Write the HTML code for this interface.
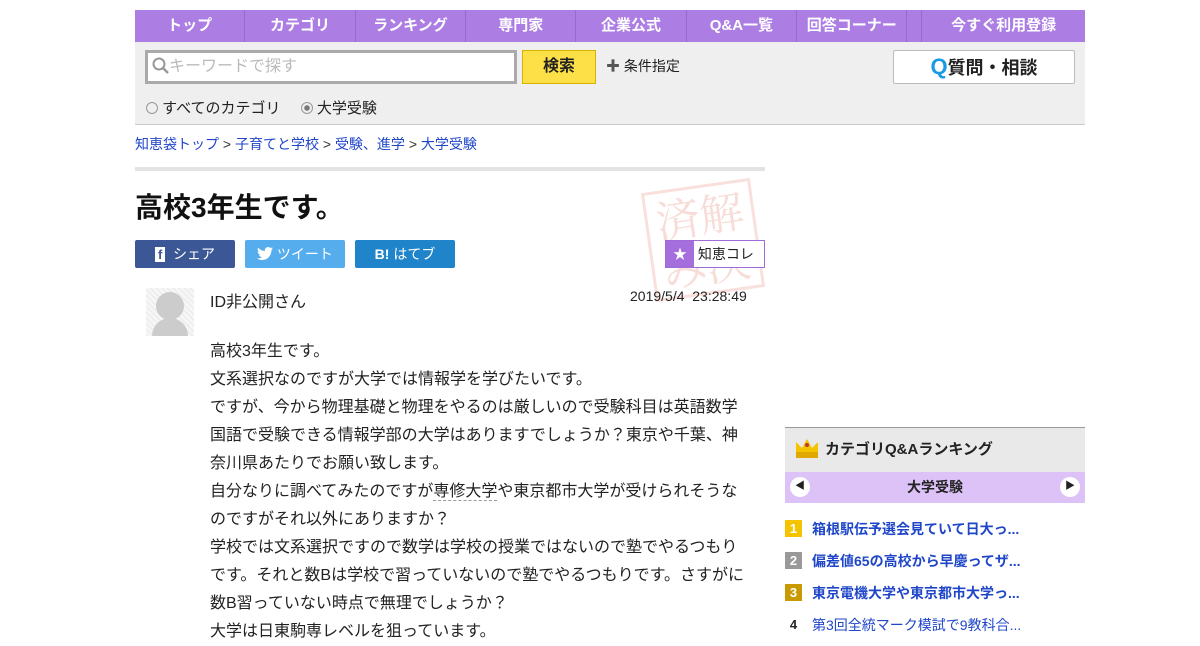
<!DOCTYPE html>
<html><head><meta charset="utf-8"><style>
*{margin:0;padding:0;box-sizing:border-box}
body{width:1200px;height:630px;overflow:hidden;background:#fff;font-family:"Liberation Sans","Noto Sans CJK JP",sans-serif;color:#222;position:relative}
.a{position:absolute}
.nav{left:135px;top:10px;width:950px;height:32px;background:#ac7ee4;display:flex}
.nav div{width:112px;color:#fff;font-weight:bold;font-size:15px;text-align:center;line-height:32px;border-right:1px solid #9a68d4}
.nav div:last-child{border:none;width:166px;border-left:1px solid #9a68d4;margin-left:14px}
.sb{left:135px;top:42px;width:950px;height:83px;background:#efefef;border-bottom:1px solid #ccc}
.bc{font-size:14px;color:#333}
.bc a{color:#1f46c8;text-decoration:none}
.sh{top:240px;height:28px;width:100px;color:#fff;font-size:14px;line-height:28px;border-radius:2px;text-align:center}
p.t{font-size:16px;line-height:28px;color:#222}
.rk{left:812px;font-size:14px;font-weight:bold;color:#1f46c8}
.num{left:785px;width:17px;height:17px;color:#fff;font-size:13px;font-weight:bold;text-align:center;line-height:17px}
</style></head><body>
<div class="a nav"><div>トップ</div><div>カテゴリ</div><div>ランキング</div><div>専門家</div><div>企業公式</div><div>Q&amp;A一覧</div><div>回答コーナー</div><div>今すぐ利用登録</div></div>
<div class="a sb"></div>
<div class="a" style="left:145px;top:50px;width:372px;height:34px;border:3px solid #aaa;background:#fff;font-size:16px;color:#bbb;line-height:28px;padding-left:4px"><svg width="17" height="17" viewBox="0 0 17 17" style="vertical-align:-3px"><circle cx="7" cy="7" r="5.5" fill="none" stroke="#999" stroke-width="2"/><path d="M11 11l5 5" stroke="#999" stroke-width="2.5"/></svg>キーワードで探す</div>
<div class="a" style="left:522px;top:50px;width:74px;height:34px;background:#fde047;border:1px solid #d9b200;font-weight:bold;font-size:16px;text-align:center;line-height:32px">検索</div>
<div class="a" style="left:606px;top:56px;font-size:14px"><b style="color:#555">✚</b> 条件指定</div>
<div class="a" style="left:893px;top:50px;width:182px;height:34px;background:#fff;border:1px solid #bbb;border-radius:2px;font-weight:bold;font-size:18px;text-align:center;line-height:32px"><span style="color:#1a9ae6;font-size:22px">Q</span>質問・相談</div>
<div class="a" style="left:146px;top:97px;font-size:15px"><span style="display:inline-block;width:12px;height:12px;border:1px solid #999;border-radius:50%;background:#eee;vertical-align:-1px"></span> すべてのカテゴリ <span style="display:inline-block;width:12px;height:12px;border:1px solid #999;border-radius:50%;background:radial-gradient(#777 2.5px,#eee 3px);vertical-align:-1px;margin-left:16px"></span> 大学受験</div>
<div class="a bc" style="left:135px;top:134px"><a>知恵袋トップ</a> &gt; <a>子育てと学校</a> &gt; <a>受験、進学</a> &gt; <a>大学受験</a></div>
<div class="a" style="left:135px;top:167px;width:630px;height:4px;background:#e3e3e3"></div>
<div class="a" style="left:135px;top:186px;font-size:28px;font-weight:bold;color:#111">高校3年生です。</div>
<div class="a" style="left:648px;top:185px;width:110px;height:110px;border:3px solid #fae0dc;transform:rotate(-8deg);color:#f8dcd7;font-size:44px;line-height:50px;text-align:center;font-family:'Noto Serif CJK SC',serif">済解<br>み決</div>
<div class="a sh" style="left:135px;background:#3b5796"><b style="background:#fff;color:#3b5796;padding:0 3px;font-size:13px">f</b>&nbsp;&nbsp;シェア</div>
<div class="a sh" style="left:245px;background:#55aded"><svg width="16" height="13" viewBox="0 0 16 13" style="vertical-align:-1px"><path d="M16 1.5c-.6.3-1.2.4-1.9.5.7-.4 1.2-1 1.4-1.8-.6.4-1.3.6-2.1.8C12.8.4 12 0 11.1 0 9.3 0 7.8 1.5 7.8 3.3c0 .3 0 .5.1.7C5.2 3.9 2.8 2.6 1.1.6.8 1.1.7 1.6.7 2.2c0 1.1.6 2.1 1.5 2.7-.5 0-1-.2-1.5-.4 0 1.6 1.1 2.9 2.6 3.2-.5.1-1 .2-1.5.1.4 1.3 1.6 2.3 3.1 2.3-1.1.9-2.6 1.4-4.1 1.4H0c1.5.9 3.2 1.5 5 1.5 6 0 9.4-5 9.4-9.4v-.4c.7-.5 1.2-1.1 1.6-1.7z" fill="#fff"/></svg> ツイート</div>
<div class="a sh" style="left:355px;background:#1f84c9"><b>B!</b> はてブ</div>
<div class="a" style="left:665px;top:240px;width:100px;height:28px;border:1px solid #a06ad9;background:#fff;font-size:14px;line-height:26px"><span style="display:inline-block;width:28px;background:#a46edd;color:#fff;text-align:center">★</span> 知恵コレ</div>
<div class="a" style="left:146px;top:288px;width:48px;height:48px;background:repeating-linear-gradient(45deg,#eee 0 2px,#f8f8f8 2px 4px);overflow:hidden"><div style="position:absolute;left:10px;top:4px;width:28px;height:28px;border-radius:50%;background:#ccc"></div><div style="position:absolute;left:6px;top:30px;width:36px;height:30px;border-radius:18px 18px 0 0;background:#ccc"></div></div>
<div class="a" style="left:210px;top:288px;font-size:16px">ID非公開さん</div>
<div class="a" style="left:630px;top:288px;font-size:14px">2019/5/4&nbsp; 23:28:49</div>
<div class="a" style="left:210px;top:338px;width:537px"><p class="t">高校3年生です。<br>文系選択なのですが大学では情報学を学びたいです。<br>ですが、今から物理基礎と物理をやるのは厳しいので受験科目は英語数学<br>国語で受験できる情報学部の大学はありますでしょうか？東京や千葉、神奈川県あたりでお願い致します。<br>自分なりに調べてみたのですが<span style="border-bottom:1px dashed #999">専修大学</span>や東京都市大学が受けられそうなのですがそれ以外にありますか？<br>学校では文系選択ですので数学は学校の授業ではないので塾でやるつもりです。それと数Bは学校で習っていないので塾でやるつもりです。さすがに数B習っていない時点で無理でしょうか？<br>大学は日東駒専レベルを狙っています。</p></div>
<div class="a" style="left:785px;top:427px;width:300px;height:45px;background:#e9e9e9;border-top:1px solid #999;font-weight:bold;font-size:15px;line-height:44px;padding-left:40px">カテゴリQ&amp;Aランキング</div>
<div class="a" style="left:795px;top:438px;width:24px;height:20px"><svg width="24" height="22"><path d="M1 4l6 6 5-9 5 9 6-6v12H1z" fill="#f5c400"/><rect x="1" y="14" width="22" height="6" fill="#e0a800"/><circle cx="12" cy="7" r="2" fill="#c0392b"/></svg></div>
<div class="a" style="left:785px;top:472px;width:300px;height:31px;background:#dcc2f7;font-weight:bold;font-size:14px;text-align:center;line-height:31px">大学受験</div>
<div class="a" style="left:790px;top:477px;width:20px;height:20px;border-radius:50%;background:#fff;font-size:10px;text-align:center;line-height:20px">◀</div>
<div class="a" style="left:1060px;top:477px;width:20px;height:20px;border-radius:50%;background:#fff;font-size:10px;text-align:center;line-height:20px">▶</div>
<div class="a num" style="top:520px;background:#f5c400">1</div><div class="a rk" style="top:519px">箱根駅伝予選会見ていて日大っ...</div>
<div class="a num" style="top:552px;background:#999">2</div><div class="a rk" style="top:551px">偏差値65の高校から早慶ってザ...</div>
<div class="a num" style="top:584px;background:#c99a00">3</div><div class="a rk" style="top:583px">東京電機大学や東京都市大学っ...</div>
<div class="a num" style="top:616px;color:#222">4</div><div class="a rk" style="top:615px;font-weight:normal">第3回全統マーク模試で9教科合...</div>
</body></html>
